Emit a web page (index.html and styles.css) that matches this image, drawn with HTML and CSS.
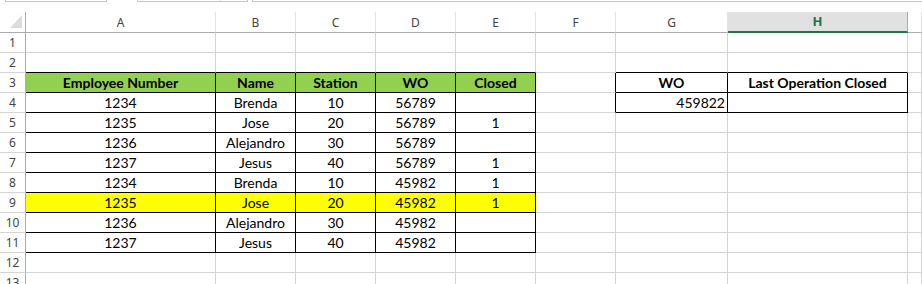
FILE: index.html
```html
<!DOCTYPE html>
<html>
	<head>
		<meta charset="UTF-8">
		<title>Sheet1</title>
		<link rel="stylesheet" href="styles.css">
	</head>
	<body>
		<div class="bar">
			<div class="box box1"></div>
			<div class="box box2"><span></span></div>
			<div class="box box3"></div>
		</div>
		<table class="sheet">
			<colgroup>
				<col style="width:26px">
				<col style="width:190px">
				<col style="width:80px">
				<col style="width:80px">
				<col style="width:80px">
				<col style="width:80px">
				<col style="width:80px">
				<col style="width:112px">
				<col style="width:180px">
				<col style="width:14px">
			</colgroup>
			<tr class="heads">
				<td class="corner"><svg width="25" height="19"><polygon points="22,3 22,16 10,16" fill="#dcdcdc"/></svg></td>
				<td>A</td><td>B</td><td>C</td><td>D</td><td>E</td><td>F</td><td>G</td><td class="sel">H</td><td></td>
			</tr>
			<tr>
				<td class="rn">1</td>
				<td></td><td></td><td></td><td></td><td></td><td></td><td></td><td></td><td></td>
			</tr>
			<tr>
				<td class="rn">2</td>
				<td class="top"></td><td class="top"></td><td class="top"></td><td class="top"></td><td class="top"></td><td></td><td class="top"></td><td class="top"></td><td></td>
			</tr>
			<tr>
				<td class="rn">3</td>
				<td class="bx green b">Employee Number</td>
				<td class="bx green b">Name</td>
				<td class="bx green b">Station</td>
				<td class="bx green b">WO</td>
				<td class="bx green b">Closed</td>
				<td class="left"></td>
				<td class="bx b">WO</td>
				<td class="bx b">Last Operation Closed</td>
				<td></td>
			</tr>
			<tr>
				<td class="rn">4</td>
				<td class="bx">1234</td><td class="bx">Brenda</td><td class="bx">10</td><td class="bx">56789</td><td class="bx"></td>
				<td class="left"></td>
				<td class="bx r">459822</td><td class="bx"></td><td></td>
			</tr>
			<tr>
				<td class="rn">5</td>
				<td class="bx">1235</td><td class="bx">Jose</td><td class="bx">20</td><td class="bx">56789</td><td class="bx">1</td>
				<td></td><td></td><td></td><td></td>
			</tr>
			<tr>
				<td class="rn">6</td>
				<td class="bx">1236</td><td class="bx">Alejandro</td><td class="bx">30</td><td class="bx">56789</td><td class="bx"></td>
				<td></td><td></td><td></td><td></td>
			</tr>
			<tr>
				<td class="rn">7</td>
				<td class="bx">1237</td><td class="bx">Jesus</td><td class="bx">40</td><td class="bx">56789</td><td class="bx">1</td>
				<td></td><td></td><td></td><td></td>
			</tr>
			<tr>
				<td class="rn">8</td>
				<td class="bx">1234</td><td class="bx">Brenda</td><td class="bx">10</td><td class="bx">45982</td><td class="bx">1</td>
				<td></td><td></td><td></td><td></td>
			</tr>
			<tr class="hl">
				<td class="rn">9</td>
				<td class="bx">1235</td><td class="bx">Jose</td><td class="bx">20</td><td class="bx">45982</td><td class="bx">1</td>
				<td></td><td></td><td></td><td></td>
			</tr>
			<tr>
				<td class="rn">10</td>
				<td class="bx">1236</td><td class="bx">Alejandro</td><td class="bx">30</td><td class="bx">45982</td><td class="bx"></td>
				<td></td><td></td><td></td><td></td>
			</tr>
			<tr>
				<td class="rn">11</td>
				<td class="bx">1237</td><td class="bx">Jesus</td><td class="bx">40</td><td class="bx">45982</td><td class="bx"></td>
				<td></td><td></td><td></td><td></td>
			</tr>
			<tr>
				<td class="rn">12</td>
				<td></td><td></td><td></td><td></td><td></td><td></td><td></td><td></td><td></td>
			</tr>
			<tr>
				<td class="rn">13</td>
				<td></td><td></td><td></td><td></td><td></td><td></td><td></td><td></td><td></td>
			</tr>
		</table>
	</body>
</html>
```

FILE: styles.css
```css
html,body{
	margin: 0;
	padding: 0;
	background: #fff;
	overflow: hidden;
}
.bar{
	display: flex;
	height: 12px;
}
.box{
	box-sizing: border-box;
	height: 2px;
	border: 1px solid #c6c6c6;
	border-top: none;
}
.box1{
	margin-left: 5px;
	width: 102px;
}
.box2{
	margin-left: 30px;
	width: 111px;
	position: relative;
}
.box2 span{
	position: absolute;
	left: 82px;
	top: 0;
	width: 1px;
	height: 1px;
	background: #e0e0e0;
}
.box3{
	margin-left: 4px;
	flex: 1;
	border-right: none;
}
.sheet{
	table-layout: fixed;
	width: 922px;
	border-collapse: separate;
	border-spacing: 0;
	font-family: Lato, "Liberation Sans", sans-serif;
	font-size: 14px;
	color: #000;
}
.sheet tr{
	height: 20px;
}
.sheet td{
	padding: 0;
	height: 20px;
	box-sizing: border-box;
	line-height: 19px;
	text-align: center;
	white-space: nowrap;
	overflow: hidden;
	border-right: 1px solid #d4d4d4;
	border-bottom: 1px solid #d4d4d4;
}
.heads td{
	font-family: "Noto Sans", "DejaVu Sans", sans-serif;
	font-size: 12px;
	color: #444;
	border-right-color: #e1e1e1;
	border-bottom-color: #ababab;
}
.sheet .corner{
	border-right-color: #ababab;
	line-height: 0;
	vertical-align: top;
}
.heads .sel{
	background: #e1e1e1;
	color: #217346;
	font-weight: bold;
	font-size: 13px;
	border-right-color: #ababab;
	border-bottom: 2px solid #217346;
}
.sheet .rn{
	font-family: "Noto Sans", "DejaVu Sans", sans-serif;
	font-size: 12px;
	color: #444;
	border-right-color: #ababab;
	border-bottom-color: #d4d4d4;
}
.sheet .bx{
	border-right-color: #000;
	border-bottom-color: #000;
}
.sheet .top{
	border-bottom-color: #000;
}
.sheet .left{
	border-right-color: #000;
}
.green{
	background: #92d050;
}
.b{
	font-weight: bold;
}
.sheet .r{
	text-align: right;
	padding-right: 2px;
}
.hl .bx{
	background: #ffff00;
}
```
